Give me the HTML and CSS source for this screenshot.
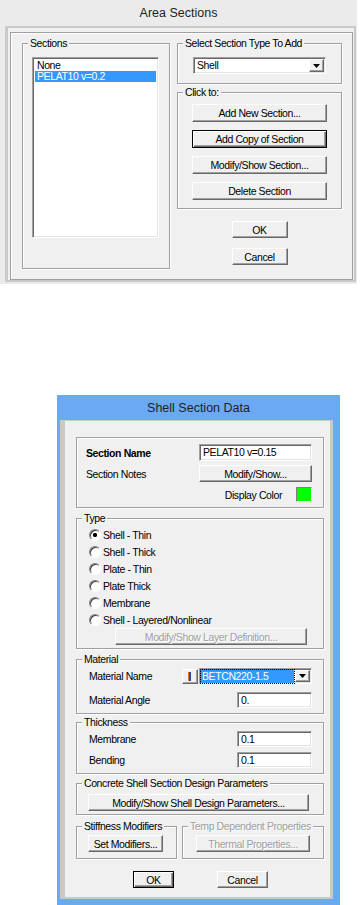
FILE: index.html
```html
<!DOCTYPE html>
<html lang="en">
<head>
    <meta charset="UTF-8">
    <meta name="viewport" content="width=device-width, initial-scale=1.0">
    <title>Area Sections</title>
    <link rel="stylesheet" href="styles.css">
</head>
<body>
<div class="page">

    <!-- Area Sections -->
    <div class="window area-win">
        <div class="window-title">Area Sections</div>
        <div class="client">
            <div class="panel">
                <div class="group sections-group">
                    <div class="group-title">Sections</div>
                    <div class="listbox">
                        <div class="list-item">None</div>
                        <div class="list-item selected">PELAT10 v=0.2</div>
                    </div>
                </div>
                <div class="right-col">
                    <div class="group type-select-group">
                        <div class="group-title">Select Section Type To Add</div>
                        <div class="combo type-combo">
                            <span class="combo-text">Shell</span>
                            <span class="combo-btn"><svg width="7" height="4" viewBox="0 0 7 4"><path d="M0 0h7L3.5 4z" fill="#000"/></svg></span>
                        </div>
                    </div>
                    <div class="group click-group">
                        <div class="group-title">Click to:</div>
                        <div class="btn click-btn">Add New Section...</div>
                        <div class="btn click-btn focused">Add Copy of Section</div>
                        <div class="btn click-btn">Modify/Show Section...</div>
                        <div class="btn click-btn">Delete Section</div>
                    </div>
                    <div class="btn dlg-btn ok-top">OK</div>
                    <div class="btn dlg-btn cancel-top">Cancel</div>
                </div>
            </div>
        </div>
    </div>

    <!-- Shell Section Data -->
    <div class="window shell-win">
        <div class="window-title">Shell Section Data</div>
        <div class="client shell-client">

            <div class="group name-group">
                <div class="form-row">
                    <span class="bold">Section Name</span>
                    <div class="field name-field">PELAT10 v=0.15</div>
                </div>
                <div class="form-row gap4">
                    <span>Section Notes</span>
                    <div class="btn notes-btn">Modify/Show...</div>
                </div>
                <div class="form-row gap4 color-row">
                    <span>Display Color</span>
                    <span class="swatch"></span>
                </div>
            </div>

            <div class="group type-group">
                <div class="group-title">Type</div>
                <div class="radios">
                    <div class="radio-row"><span class="radio checked"></span>Shell - Thin</div>
                    <div class="radio-row"><span class="radio"></span>Shell - Thick</div>
                    <div class="radio-row"><span class="radio"></span>Plate - Thin</div>
                    <div class="radio-row"><span class="radio"></span>Plate Thick</div>
                    <div class="radio-row"><span class="radio"></span>Membrane</div>
                    <div class="radio-row"><span class="radio"></span>Shell - Layered/Nonlinear</div>
                </div>
                <div class="btn disabled layer-btn">Modify/Show Layer Definition...</div>
            </div>

            <div class="group material-group">
                <div class="group-title">Material</div>
                <div class="form-row mat-row">
                    <span>Material Name</span>
                    <div class="btn info-btn"><svg width="4" height="9" viewBox="0 0 4 9"><rect x="0" y="0" width="1" height="9" fill="#e07a1c"/><rect x="1" y="0" width="2" height="9" fill="#1f4fb8"/></svg></div>
                    <div class="combo mat-combo">
                        <span class="combo-text"><span class="sel-text">BETCN220-1.5</span></span>
                        <span class="combo-btn"><svg width="7" height="4" viewBox="0 0 7 4"><path d="M0 0h7L3.5 4z" fill="#000"/></svg></span>
                    </div>
                </div>
                <div class="form-row angle-row">
                    <span>Material Angle</span>
                    <div class="field short-field">0.</div>
                </div>
            </div>

            <div class="group thick-group">
                <div class="group-title">Thickness</div>
                <div class="form-row thick-row">
                    <span>Membrane</span>
                    <div class="field short-field">0.1</div>
                </div>
                <div class="form-row thick-row2">
                    <span>Bending</span>
                    <div class="field short-field">0.1</div>
                </div>
            </div>

            <div class="group design-group">
                <div class="group-title">Concrete Shell Section Design Parameters</div>
                <div class="btn design-btn">Modify/Show Shell Design Parameters...</div>
            </div>

            <div class="pair-row">
                <div class="group stiff-group">
                    <div class="group-title">Stiffness Modifiers</div>
                    <div class="btn stiff-btn">Set Modifiers...</div>
                </div>
                <div class="group temp-group">
                    <div class="group-title disabled-text">Temp Dependent Properties</div>
                    <div class="btn disabled thermal-btn">Thermal Properties...</div>
                </div>
            </div>

            <div class="bottom-btns">
                <div class="btn default ok-btn">OK</div>
                <div class="btn cancel-btn">Cancel</div>
            </div>
        </div>
    </div>

</div>
</body>
</html>
```

FILE: styles.css
```css
* {
    box-sizing: border-box;
}
body {
    margin: 0;
    background: #ffffff;
    font-family: "Liberation Sans", Arial, sans-serif;
    font-size: 10.5px;
    letter-spacing: -0.4px;
    color: #000000;
}
.page {
    display: flex;
    flex-direction: column;
    align-items: flex-start;
}

/* windows */
.window {
    display: flex;
    flex-direction: column;
}
.window-title {
    display: flex;
    align-items: center;
    justify-content: center;
    font-size: 12.5px;
    letter-spacing: 0;
    color: #1e1e1e;
}
.client {
    background: #f0f0f0;
    border-style: solid;
    border-color: #c9c9c9;
}
.area-win {
    width: 357px;
    height: 284px;
    background: #ebebeb;
    padding: 0 1px 2px 5px;
}
.area-win .window-title {
    height: 26px;
    margin-left: -5px;
    margin-right: -1px;
}
.area-win .client {
    flex: 1;
    border-width: 2px 2px 2px 3px;
    display: flex;
    flex-direction: column;
}
.shell-win {
    width: 283px;
    height: 510px;
    margin-top: 111px;
    margin-left: 57px;
    background: #6ba9f5;
    padding: 0 7px 6px 3px;
}
.shell-win .window-title {
    height: 25px;
    margin-left: -3px;
    margin-right: -7px;
}
.shell-client {
    flex: 1;
    border-width: 1px 3px 2px 5px;
    padding: 16px 6px 0 11px;
    display: flex;
    flex-direction: column;
}

/* panels and group boxes */
.panel {
    margin: 4px 1px 0 2px;
    height: 248px;
    border: 1px solid #a0a0a0;
    box-shadow: inset 1px 1px 0 #ffffff;
    padding: 10px 10px 10px 11px;
    display: flex;
    gap: 7px;
}
.group {
    border: 1px solid #a0a0a0;
    box-shadow: inset 1px 1px 0 #ffffff, 1px 1px 0 #ffffff;
    display: flex;
    flex-direction: column;
    align-items: flex-start;
}
.group-title {
    margin: -7px 0 0 5px;
    padding: 0 2px;
    height: 13px;
    line-height: 13px;
    background: #f0f0f0;
    white-space: nowrap;
}
.disabled-text {
    color: #a0a0a0;
    text-shadow: 1px 1px 0 #ffffff;
}

/* controls */
.btn {
    display: flex;
    align-items: center;
    justify-content: center;
    height: 17px;
    background: #f0f0f0;
    border: 1px solid;
    border-color: #ffffff #696969 #696969 #ffffff;
    box-shadow: inset -1px -1px 0 #a0a0a0;
    white-space: nowrap;
}
.btn.focused,
.btn.default {
    border-color: #000000;
    box-shadow: inset 1px 1px 0 #ffffff, inset -1px -1px 0 #696969, inset -2px -2px 0 #a0a0a0;
}
.btn.disabled {
    color: #a0a0a0;
    text-shadow: 1px 1px 0 #ffffff;
}
.field {
    height: 17px;
    background: #ffffff;
    border: 1px solid;
    border-color: #a0a0a0 #ffffff #ffffff #a0a0a0;
    box-shadow: inset 1px 1px 0 #696969, inset -1px -1px 0 #e3e3e3;
    padding: 0 3px;
    line-height: 15px;
    white-space: nowrap;
    overflow: hidden;
}
.combo {
    display: flex;
    height: 17px;
    background: #ffffff;
    border: 1px solid;
    border-color: #a0a0a0 #ffffff #ffffff #a0a0a0;
    box-shadow: inset 1px 1px 0 #696969, inset -1px -1px 0 #e3e3e3;
    padding: 1px;
}
.combo-text {
    flex: 1;
    padding-left: 2px;
    line-height: 13px;
    display: flex;
    align-items: center;
}
.combo-btn {
    width: 15px;
    display: flex;
    align-items: center;
    justify-content: center;
    background: #f0f0f0;
    border: 1px solid;
    border-color: #ffffff #696969 #696969 #ffffff;
    box-shadow: inset -1px -1px 0 #a0a0a0;
}

/* Area Sections */
.sections-group {
    width: 148px;
    height: 226px;
}
.listbox {
    margin: 7px 0 0 9px;
    width: 127px;
    height: 181px;
    background: #ffffff;
    border: 1px solid;
    border-color: #a0a0a0 #ffffff #ffffff #a0a0a0;
    box-shadow: inset 1px 1px 0 #696969, inset -1px -1px 0 #e3e3e3;
    padding: 2px 2px;
}
.list-item {
    height: 11px;
    line-height: 11px;
    padding-left: 2px;
    white-space: nowrap;
}
.list-item.selected {
    background: #3399ff;
    color: #ffffff;
}
.right-col {
    width: 165px;
    display: flex;
    flex-direction: column;
    align-items: center;
}
.type-select-group {
    width: 100%;
    height: 41px;
}
.type-combo {
    margin: 7px 0 0 15px;
    width: 133px;
}
.click-group {
    width: 100%;
    height: 117px;
    margin-top: 8px;
}
.click-btn {
    width: 135px;
    height: 18px;
    margin: 8px 0 0 14px;
}
.click-btn:nth-child(2) {
    margin-top: 5px;
}
.dlg-btn {
    width: 56px;
}
.ok-top {
    margin-top: 12px;
}
.cancel-top {
    margin-top: 10px;
}

/* Shell Section Data */
.form-row {
    display: flex;
    align-items: center;
    width: 100%;
}
.bold {
    font-weight: bold;
}
.name-group {
    height: 71px;
    padding: 6px 11px 0 9px;
}
.name-group .form-row {
    height: 17px;
}
.gap4 {
    margin-top: 4px;
}
.name-field,
.notes-btn {
    margin-left: auto;
    width: 113px;
}
.color-row {
    justify-content: flex-end;
}
.swatch {
    width: 16px;
    height: 15px;
    margin-left: 14px;
    background: #00ff00;
    border: 1px solid;
    border-color: #808080 #ffffff #ffffff #808080;
}
.type-group {
    height: 131px;
    margin-top: 10px;
}
.radios {
    margin-top: 1px;
    padding-left: 12px;
}
.radio-row {
    height: 17px;
    display: flex;
    align-items: center;
    white-space: nowrap;
}
.radio {
    width: 12px;
    height: 12px;
    margin-right: 2px;
    border-radius: 50%;
    background: #ffffff;
    border: 1px solid;
    border-color: #808080 #ffffff #ffffff #808080;
    box-shadow: inset 1px 1px 0 #404040;
}
.radio.checked {
    background: radial-gradient(circle, #000000 1.8px, #ffffff 2.4px);
}
.layer-btn {
    margin-left: 38px;
    width: 192px;
}
.material-group {
    height: 55px;
    margin-top: 10px;
}
.material-group .form-row,
.thick-group .form-row {
    padding: 0 11px 0 12px;
}
.mat-row {
    margin-top: 2px;
    height: 16px;
}
.info-btn {
    margin-left: auto;
    width: 16px;
    height: 15px;
}
.mat-combo {
    margin-left: 1px;
    width: 113px;
    height: 16px;
}
.sel-text {
    background: #3399ff;
    color: #ffffff;
    outline: 1px dotted #000000;
    width: 100%;
    padding-left: 1px;
}
.mat-combo .combo-text {
    padding: 0 1px 0 0;
}
.angle-row {
    margin-top: 8px;
    height: 16px;
}
.short-field {
    margin-left: auto;
    width: 75px;
    height: 16px;
    line-height: 14px;
}
.thick-group {
    height: 52px;
    margin-top: 8px;
}
.thick-row {
    margin-top: 2px;
    height: 16px;
}
.thick-row2 {
    margin-top: 5px;
    height: 16px;
}
.design-group {
    height: 32px;
    margin-top: 9px;
}
.design-btn {
    margin: 4px 0 0 11px;
    width: 221px;
}
.pair-row {
    display: flex;
    gap: 5px;
    margin-top: 11px;
}
.stiff-group {
    width: 101px;
    height: 33px;
}
.stiff-btn {
    margin: 2px 0 0 11px;
    width: 75px;
}
.temp-group {
    width: 142px;
    height: 33px;
}
.thermal-btn {
    margin: 2px 0 0 13px;
    width: 114px;
}
.bottom-btns {
    display: flex;
    margin-top: 12px;
    padding-left: 57px;
}
.ok-btn {
    width: 41px;
}
.cancel-btn {
    width: 51px;
    margin-left: 43px;
}
```
